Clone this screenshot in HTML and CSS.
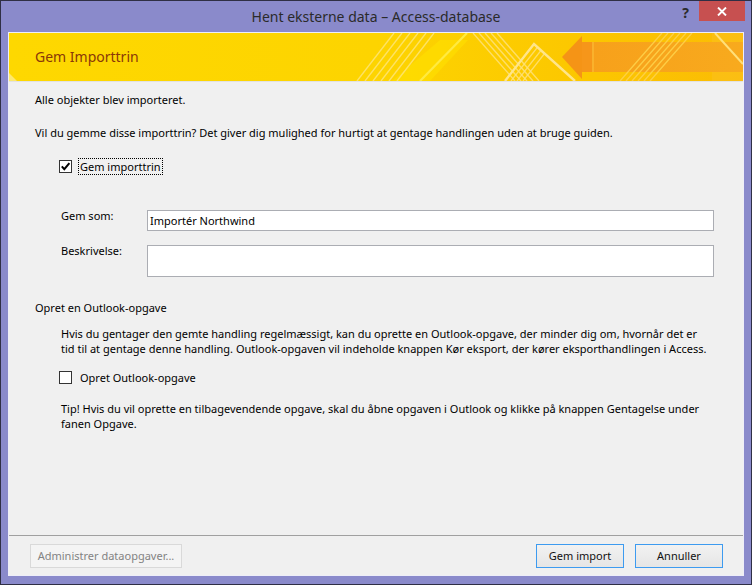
FILE: index.html
```html
<!DOCTYPE html>
<html lang="da">
<head>
<meta charset="utf-8">
<title>Hent eksterne data – Access-database</title>
<link rel="stylesheet" href="styles.css">
</head>
<body>
<div class="window">
  <div class="titlebar">
    <div class="tb-side"></div>
    <div class="tb-title">Hent eksterne data – Access-database</div>
    <div class="tb-controls">
      <span class="tb-help">?</span>
      <span class="tb-close"><svg width="10" height="9" viewBox="0 0 10 9"><path d="M1 0.5L9 8.5M9 0.5L1 8.5" stroke="#fff" stroke-width="1.9"/></svg></span>
    </div>
  </div>
  <div class="client">
    <div class="banner">
      <svg class="banner-art" width="734" height="48" viewBox="9 33 734 48" preserveAspectRatio="none">
        <defs>
          <linearGradient id="bg" x1="0" y1="0" x2="1" y2="0">
            <stop offset="0" stop-color="#fed800"/>
            <stop offset="0.5" stop-color="#fdd400"/>
            <stop offset="0.8" stop-color="#fcc600"/>
            <stop offset="1" stop-color="#fbbc05"/>
          </linearGradient>
          <linearGradient id="shaft" x1="0" y1="0" x2="1" y2="0">
            <stop offset="0" stop-color="#f7a01b"/>
            <stop offset="1" stop-color="#f8aa1d"/>
          </linearGradient>
          <clipPath id="chev"><polygon points="505,81 534,44 575,81"/></clipPath>
        </defs>
        <rect x="9" y="33" width="734" height="48" fill="url(#bg)"/>
        <polygon points="9,73 17,81 9,81" fill="#fde870"/>
        <polygon points="392,81 430,81 468,40 440,40" fill="#ffe200" opacity="0.55"/>
        <g stroke="#ffe676" stroke-width="1.4" opacity="0.85">
          <line x1="357" y1="81" x2="394" y2="33"/>
          <line x1="365" y1="81" x2="402" y2="33"/>
          <line x1="373" y1="81" x2="410" y2="33"/>
          <line x1="381" y1="81" x2="418" y2="33"/>
          <line x1="389" y1="81" x2="426" y2="33"/>
          <line x1="397" y1="81" x2="434" y2="33"/>
        </g>
        <line x1="420" y1="81" x2="467" y2="33" stroke="#ffea40" stroke-width="2.2"/>
        <g stroke="#ffe27a" stroke-width="1.4" opacity="0.85">
          <line x1="473" y1="33" x2="515" y2="81"/>
          <line x1="479" y1="33" x2="521" y2="81"/>
          <line x1="485" y1="33" x2="527" y2="81"/>
          <line x1="491" y1="33" x2="533" y2="81"/>
          <line x1="497" y1="33" x2="539" y2="81"/>
        </g>
        <g clip-path="url(#chev)" stroke="#ffe27a" stroke-width="1.3" opacity="0.85">
          <line x1="511" y1="81" x2="540" y2="44"/>
          <line x1="517" y1="81" x2="546" y2="44"/>
          <line x1="523" y1="81" x2="552" y2="44"/>
        </g>
        <polyline points="505,81 534,44 575,81" fill="none" stroke="#ffe58a" stroke-width="2.4"/>
        <polygon points="712,33 743,33 743,81 712,81" fill="#fbbf1c" opacity="0.6"/>
        <rect x="582" y="42" width="161" height="30" fill="url(#shaft)"/>
        <polygon points="562,57 582,36 582,79" fill="#f59416"/>
        <rect x="582" y="42" width="10" height="30" fill="#f6961a"/>
        <line x1="593" y1="42" x2="593" y2="72" stroke="#fbbd3a" stroke-width="1.2"/>
        <g stroke="#ffd24a" stroke-width="1.4" opacity="0.9">
          <line x1="620" y1="81" x2="662" y2="33"/>
          <line x1="626" y1="81" x2="668" y2="33"/>
          <line x1="632" y1="81" x2="674" y2="33"/>
          <line x1="638" y1="81" x2="680" y2="33"/>
          <line x1="644" y1="81" x2="686" y2="33"/>
          <line x1="650" y1="81" x2="692" y2="33"/>
        </g>
        <line x1="715" y1="33" x2="743" y2="64" stroke="#ffe07a" stroke-width="2"/>
      </svg>
      <div class="banner-title">Gem Importtrin</div>
    </div>

    <div class="content">
      <p class="intro">Alle objekter blev importeret.</p>
      <p class="question">Vil du gemme disse importtrin? Det giver dig mulighed for hurtigt at gentage handlingen uden at bruge guiden.</p>
      <div class="check-row save-row">
        <span class="box"><svg width="11" height="11" viewBox="0 0 11 11"><path d="M1.8 5.4L4.3 8.2L9.4 2.2" fill="none" stroke="#000" stroke-width="2"/></svg></span>
        <span class="focus-label">Gem importtrin</span>
      </div>

      <div class="form">
        <span class="f-label">Gem som:</span>
        <div class="field">Importér Northwind</div>
        <span class="f-label">Beskrivelse:</span>
        <div class="field area"></div>
      </div>

      <p class="section-title">Opret en Outlook-opgave</p>
      <div class="indent">
        <p class="para">Hvis du gentager den gemte handling regelmæssigt, kan du oprette en Outlook-opgave, der minder dig om, hvornår det er<br>tid til at gentage denne handling. Outlook-opgaven vil indeholde knappen Kør eksport, der kører eksporthandlingen i Access.</p>
        <div class="check-row outlook-row">
          <span class="box"></span>
          <span class="plain-label">Opret Outlook-opgave</span>
        </div>
        <p class="tip">Tip! Hvis du vil oprette en tilbagevendende opgave, skal du åbne opgaven i Outlook og klikke på knappen Gentagelse under<br>fanen Opgave.</p>
      </div>
    </div>

    <div class="footer">
      <button class="btn disabled" type="button">Administrer dataopgaver...</button>
      <div class="footer-right">
        <button class="btn" type="button">Gem import</button>
        <button class="btn" type="button">Annuller</button>
      </div>
    </div>
  </div>
</div>
</body>
</html>
```

FILE: styles.css
```css
* { box-sizing: border-box; }

html, body {
  margin: 0;
  padding: 0;
}

body {
  width: 752px;
  height: 585px;
  overflow: hidden;
  font-family: "Noto Sans", "Open Sans", sans-serif;
  font-size: 11px;
  line-height: 13px;
  color: #000;
  background: #8a8acb;
}

p { margin: 0; }

.window {
  width: 752px;
  height: 585px;
  border: 1px solid #2f2f45;
  background: #8a8acb;
  display: flex;
  flex-direction: column;
}

/* title bar */
.titlebar {
  flex: none;
  height: 31px;
  display: grid;
  grid-template-columns: 1fr auto 1fr;
}

.tb-title {
  font-size: 14px;
  line-height: 31px;
  color: #2a2a2a;
  white-space: nowrap;
}

.tb-controls {
  display: flex;
  justify-content: flex-end;
  align-items: flex-start;
}

.tb-help {
  font-size: 14px;
  font-weight: bold;
  line-height: 20px;
  color: #2b2b2b;
  margin-top: 2px;
  margin-right: 10px;
}

.tb-close {
  width: 46px;
  height: 20px;
  background: #c75050;
  display: flex;
  align-items: center;
  justify-content: center;
  margin-right: 6px;
}

.tb-close svg { display: block; }

/* client */
.client {
  flex: 1;
  margin: 0 7px 8px 7px;
  border: 1px solid #eeeef8;
  background: #f0f0f0;
  display: flex;
  flex-direction: column;
  min-height: 0;
}

.banner {
  flex: none;
  height: 49px;
  border-bottom: 1px solid #e2e2e2;
  display: grid;
}

.banner-art,
.banner-title {
  grid-area: 1 / 1;
}

.banner-art { display: block; }

.banner-title {
  font-size: 14px;
  line-height: 20px;
  color: #8a3808;
  padding: 14px 0 0 26px;
}

.content {
  flex: 1;
  padding: 11px 20px 0 26px;
}

.question { margin-top: 20px; }

.check-row {
  display: flex;
  align-items: center;
}

.save-row {
  margin-top: 19px;
  margin-left: 24px;
}

.box {
  width: 13px;
  height: 13px;
  border: 1px solid #333;
  background: #fff;
  display: flex;
  align-items: center;
  justify-content: center;
  flex: none;
}

.box svg { display: block; }

.focus-label {
  margin-left: 6px;
  border: 1px dotted #000;
  padding: 0 1px;
  line-height: 15px;
}

.form {
  margin-top: 35px;
  margin-left: 26px;
  display: grid;
  grid-template-columns: 86px 567px;
  row-gap: 14px;
}

.f-label {
  margin-top: -1px;
}

.field {
  height: 21px;
  border: 1px solid #abadb3;
  background: #fff;
  padding: 0 2px;
  line-height: 19px;
}

.field.area { height: 32px; }

.section-title { margin-top: 24px; }

.indent { padding-left: 26px; }

.para {
  margin-top: 12px;
  line-height: 15px;
  white-space: nowrap;
}

.outlook-row {
  margin-top: 15px;
  margin-left: -2px;
}

.plain-label { margin-left: 8px; }

.tip {
  margin-top: 17px;
  line-height: 15px;
  white-space: nowrap;
}

/* footer */
.footer {
  flex: none;
  border-top: 1px solid #a0a0a0;
  padding: 8px 20px 7px 21px;
  display: flex;
  justify-content: space-between;
}

.footer-right {
  display: flex;
  gap: 11px;
}

.btn {
  height: 24px;
  width: 88px;
  padding: 0;
  font-family: inherit;
  font-size: 11px;
  line-height: 22px;
  color: #111;
  border: 1px solid #3d9bf0;
  background: linear-gradient(#f2f2f2, #e5e5e5);
  border-radius: 0;
}

.btn.disabled {
  width: 152px;
  color: #838383;
  border-color: #d9d9d9;
  background: #f4f4f4;
}
```
